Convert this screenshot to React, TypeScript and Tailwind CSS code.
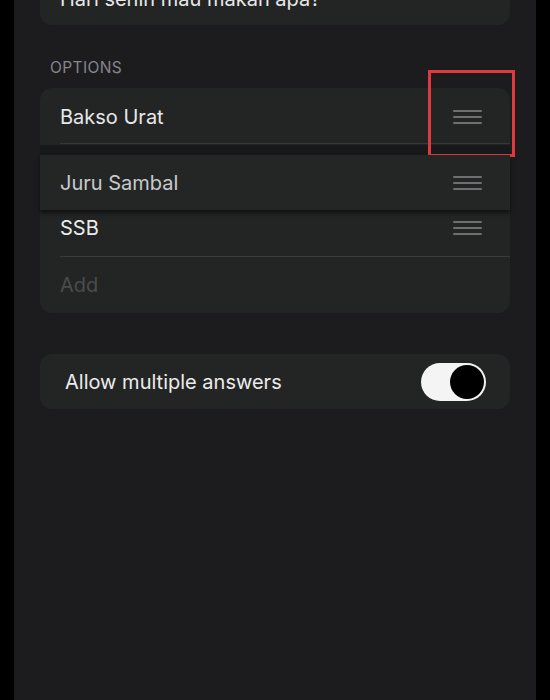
import React from "react";

function Grip() {
  return (
    <div className="flex w-[29px] flex-col gap-[4px]">
      <div className="h-[2px] rounded-full bg-[#6e6f71]" />
      <div className="h-[2px] rounded-full bg-[#6e6f71]" />
      <div className="h-[2px] rounded-full bg-[#6e6f71]" />
    </div>
  );
}

export default function App() {
  return (
    <div
      className="flex h-[700px] w-[550px] overflow-hidden bg-black"
      style={{ fontFamily: "Inter, 'Noto Sans', sans-serif" }}
    >
      <div className="ml-[14px] flex h-full w-[522px] flex-col bg-[#1c1c1f] px-[26px]">
        {/* question card (cut off) */}
        <div className="mt-[-35px] flex h-[60px] items-end rounded-[12px] bg-[#232524] px-[20px] pb-[14px]">
          <span className="text-[20px] leading-[24px] text-[#e8e8e8]">Hari senin mau makan apa?</span>
        </div>

        <div className="mt-[33px] pl-[10px] text-[15.5px] leading-[20px] tracking-[0.4px] text-[#86868b]">
          OPTIONS
        </div>

        <div className="relative mt-[10px] flex flex-col">
          {/* Bakso Urat */}
          <div className="flex h-[57px] items-center rounded-t-[12px] bg-[#232524] pl-[20px] pr-[28px]">
            <span className="flex-1 text-[20px] text-[#e8e8e8]">Bakso Urat</span>
            <Grip />
          </div>
          <div className="h-[10px] bg-[#18191b]" />
          {/* Juru Sambal lifted */}
          <div className="relative z-10 flex h-[55px] items-center bg-[#242626] pl-[20px] pr-[28px] shadow-[0_3px_4px_rgba(0,0,0,0.55)]">
            <span className="flex-1 text-[20px] text-[#c9cacb]">Juru Sambal</span>
            <Grip />
          </div>
          {/* SSB + Add */}
          <div className="flex flex-col rounded-b-[12px] bg-[#232524]">
            <div className="flex h-[46px] items-center pb-[10px] pl-[20px] pr-[28px]">
              <span className="flex-1 text-[20px] text-[#ececec]">SSB</span>
              <Grip />
            </div>
            <div className="ml-[20px] h-px bg-[#3a3c3c]" />
            <div className="flex h-[56px] items-center pl-[20px]">
              <span className="text-[20px] text-[#4a4c4c]">Add</span>
            </div>
          </div>
          {/* separator under Bakso */}
          <div className="absolute left-[20px] right-0 top-[55px] h-px bg-[#36383a]" />
          {/* red highlight */}
          <div className="absolute left-[388px] top-[-18px] h-[87px] w-[87px] border-[3px] border-[#e0393e]" />
        </div>

        {/* Allow multiple answers */}
        <div className="mt-[41px] flex h-[55px] items-center justify-between rounded-[12px] bg-[#232524] pl-[25px] pr-[24px]">
          <span className="text-[20px] text-[#ececec]">Allow multiple answers</span>
          <div className="flex h-[38px] w-[65px] items-center justify-end rounded-full bg-[#f4f4f4] pr-[2px]">
            <div className="h-[34px] w-[34px] rounded-full bg-black" />
          </div>
        </div>
      </div>
    </div>
  );
}
